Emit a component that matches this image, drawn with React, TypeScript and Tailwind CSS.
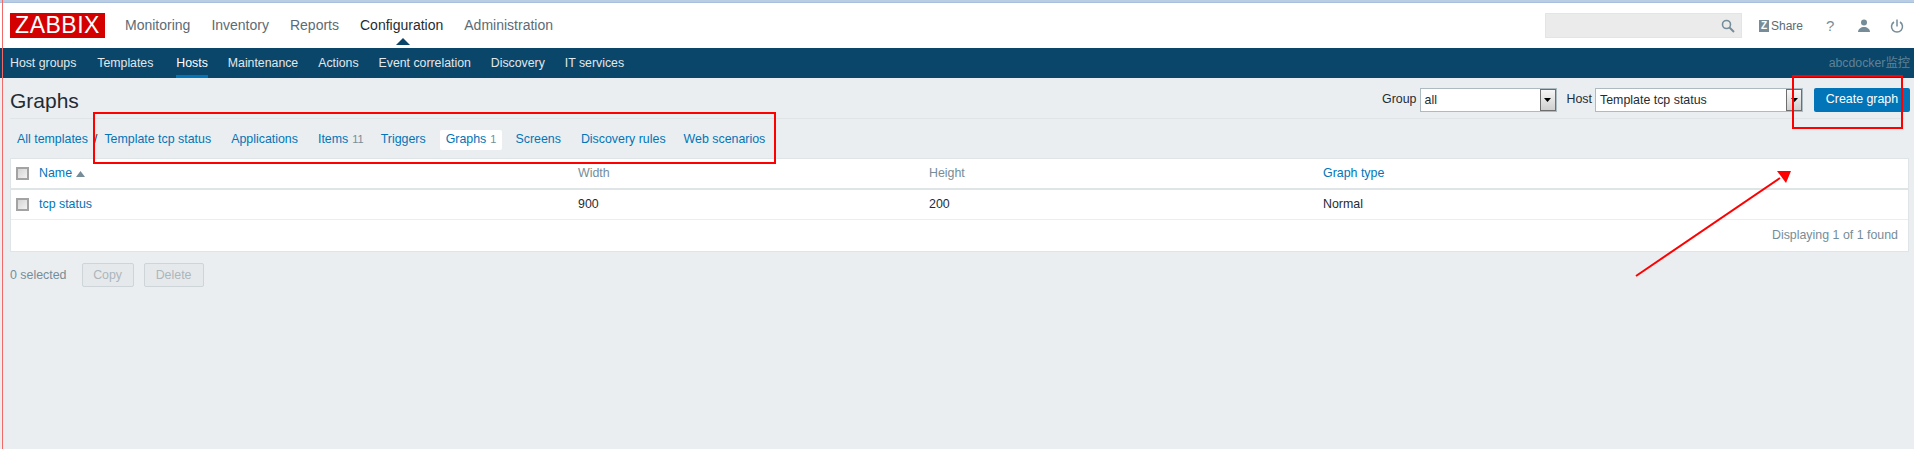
import React from "react";

const topNav = ["Monitoring", "Inventory", "Reports", "Configuration", "Administration"];
const cols = "grid grid-cols-[23px_539px_351px_394px_1fr] items-center";

function Check() {
  return (
    <span className="block w-[13px] h-[13px] border-2 border-[#a3a3a3] bg-[linear-gradient(135deg,#d4d4d4,#f2f2f2)]" />
  );
}

function Select({ value, width }: { value: string; width: string }) {
  return (
    <div className={`flex h-6 ${width} border border-[#acbbc2] bg-white`}>
      <span className="flex-1 pl-[4px] leading-[22px] text-[#1f2c33]">{value}</span>
      <span className="flex w-4 items-center justify-center border border-[#6e6e6e] bg-[linear-gradient(#f6f6f6,#cfcfcf)]">
        <svg width="7" height="4" viewBox="0 0 7 4"><path d="M0 0h7L3.500 4z" fill="#000" /></svg>
      </span>
    </div>
  );
}

function Tab({ label, count, active, className = "mr-[8px]" }: { label: string; count?: string; active?: boolean; className?: string }) {
  return (
    <span className={`${className} flex h-5 items-center gap-[4px] rounded-[2px] px-[6px] ${active ? "bg-white" : ""}`}>
      <span className="text-[#0275b8]">{label}</span>
      {count && <span className="text-[11px] text-[#768d99]">{count}</span>}
    </span>
  );
}

export default function App() {
  return (
    <div className="relative min-h-screen overflow-hidden bg-[#ebeef0] text-[12.4px] text-[#1f2c33] [font-family:'Liberation_Sans','Noto_Sans_CJK_SC',sans-serif]">
      <div className="h-[3px] bg-[#b9cde4] border-b border-[#a9c0dc]" />

      <header className="relative flex h-[45px] items-center bg-white pl-[10px]">
        <div className="flex h-[25px] w-[95px] items-center justify-center bg-[#d40000] text-[23px] leading-none tracking-[0.5px] text-white">ZABBIX</div>
        <nav className="ml-[20px] flex gap-[21px] text-[14px]">
          {topNav.map((t) => (
            <span key={t} className={t === "Configuration" ? "relative text-[#1f2c33]" : "text-[#5c6b75]"}>
              {t}
              {t === "Configuration" && (
                <span className="absolute left-[36px] top-[23px] h-0 w-0 border-x-[7px] border-b-[7px] border-x-transparent border-b-[#0a466a]" />
              )}
            </span>
          ))}
        </nav>
        <div className="ml-auto flex items-center">
          <div className="flex h-[25px] w-[197px] items-center justify-end border border-[#e4e4e4] bg-[#ebebeb] pr-[6px]">
            <svg width="14" height="14" viewBox="0 0 14 14" fill="none" stroke="#768d99" strokeWidth="1.600">
              <circle cx="5.500" cy="5.500" r="4" />
              <path d="M8.500 8.500L13 13" strokeWidth="2" />
            </svg>
          </div>
          <div className="ml-[17px] flex w-[44px] items-center gap-[2px] text-[12px] text-[#5c6b75]">
            <span className="flex h-3 w-3 items-center justify-center bg-[#768d99] text-[10px] font-bold leading-none text-white">Z</span>
            Share
          </div>
          <span className="ml-[23px] w-[8px] text-[15px] leading-none text-[#768d99]">?</span>
          <svg className="ml-[23px]" width="14" height="14" viewBox="0 0 14 14" fill="#768d99">
            <circle cx="7" cy="3.500" r="3" />
            <path d="M1 13c0-3 3-5 6-5s6 2 6 5z" />
          </svg>
          <svg className="ml-[19px] mr-[10px]" width="14" height="14" viewBox="0 0 14 14" fill="none" stroke="#768d99" strokeWidth="1.500">
            <path d="M4 3a5.500 5.500 0 1 0 6 0" />
            <path d="M7 0.500v7" />
          </svg>
        </div>
      </header>

      <nav className="flex h-[30px] items-center bg-[#0a466a] pl-[10px] pr-[4px] text-[12.3px] text-[#e2e8eb]">
        <div className="flex h-full gap-[20px]">
          <span className="flex items-center">Host groups</span>
          <span className="ml-[1px] flex items-center">Templates</span>
          <span className="ml-[3px] flex items-center border-y-[3px] border-b-[#0275b8] border-t-transparent text-white">Hosts</span>
          <span className="flex items-center">Maintenance</span>
          <span className="flex items-center">Actions</span>
          <span className="flex items-center">Event correlation</span>
          <span className="flex items-center">Discovery</span>
          <span className="flex items-center">IT services</span>
        </div>
        <span className="ml-auto text-[#5f8296]">abcdocker监控</span>
      </nav>

      <div className="mx-[10px] flex h-[41px] items-center border-b border-[#dfe4e7] pt-[3px]">
        <h1 className="mt-[1px] text-[21px] leading-none text-[#1f2c33]">Graphs</h1>
        <div className="ml-auto mr-[-6px] flex items-center">
          <span className="mr-[3px]">Group</span>
          <Select value="all" width="w-[137px]" />
          <span className="ml-[10px] mr-[3px]">Host</span>
          <Select value="Template tcp status" width="w-[208px]" />
          <button className="ml-[11px] h-6 w-[96px] rounded-[2px] bg-[#0275b8] text-white">Create graph</button>
        </div>
      </div>

      <div className="flex h-[39px] items-center pl-[17px] pt-[2px]">
        <span className="text-[#0275b8]">All templates</span>
        <span className="ml-[6px] mr-[1px] text-[#1f2c33]">/</span>
        <Tab label="Template tcp status" />
        <Tab label="Applications" />
        <Tab label="Items" count="11" className="mr-[5px]" />
        <Tab label="Triggers" />
        <Tab label="Graphs" count="1" active className="mr-[7px]" />
        <Tab label="Screens" />
        <Tab label="Discovery rules" className="mr-[6px]" />
        <Tab label="Web scenarios" />
      </div>

      <section className="mx-[10px] mr-[5px] border border-[#dfe4e7] bg-white">
        <div className={`${cols} h-[31px] border-b-[2px] border-[#dfe4e7] pl-[5px] text-[#768d99]`}>
          <Check />
          <span className="flex items-center gap-[4px] text-[#0275b8]">
            Name
            <svg className="mt-[2px]" width="9" height="6" viewBox="0 0 9 6"><path d="M0 6L4.500 0 9 6z" fill="#768d99" /></svg>
          </span>
          <span>Width</span>
          <span>Height</span>
          <span className="text-[#0275b8]">Graph type</span>
        </div>
        <div className={`${cols} h-[30px] border-b border-[#ebeef0] pl-[5px]`}>
          <Check />
          <span className="text-[#0275b8]">tcp status</span>
          <span>900</span>
          <span>200</span>
          <span>Normal</span>
        </div>
        <div className="flex h-[31px] items-center justify-end pr-[10px] text-[#768d99]">Displaying 1 of 1 found</div>
      </section>

      <div className="ml-[10px] mt-[11px] flex items-center text-[#768d99]">
        <span className="w-[71.600px]">0 selected</span>
        <button className="mr-[10px] h-6 w-[52px] rounded-[2px] border border-[#cdd5d9] bg-[#e6e9eb] text-[#acb6bc]">Copy</button>
        <button className="h-6 w-[60px] rounded-[2px] border border-[#cdd5d9] bg-[#e6e9eb] text-[#acb6bc]">Delete</button>
      </div>

      {/* hand-drawn annotations over the screenshot */}
      <div className="absolute left-[2px] top-0 h-full w-px bg-[#f06a6a]" />
      <div className="absolute left-[93px] top-[112px] h-[52px] w-[683px] border-2 border-[#ff0000]" />
      <div className="absolute left-[1792px] top-[75px] h-[54px] w-[111px] border-2 border-[#ff0000]" />
      <svg className="absolute left-[1630px] top-[165px]" width="170" height="115" viewBox="0 0 170 115" fill="none">
        <path d="M6 111L150 13" stroke="#ff0000" strokeWidth="2" />
        <path d="M147 6H161L156 18z" fill="#ff0000" />
      </svg>
    </div>
  );
}
